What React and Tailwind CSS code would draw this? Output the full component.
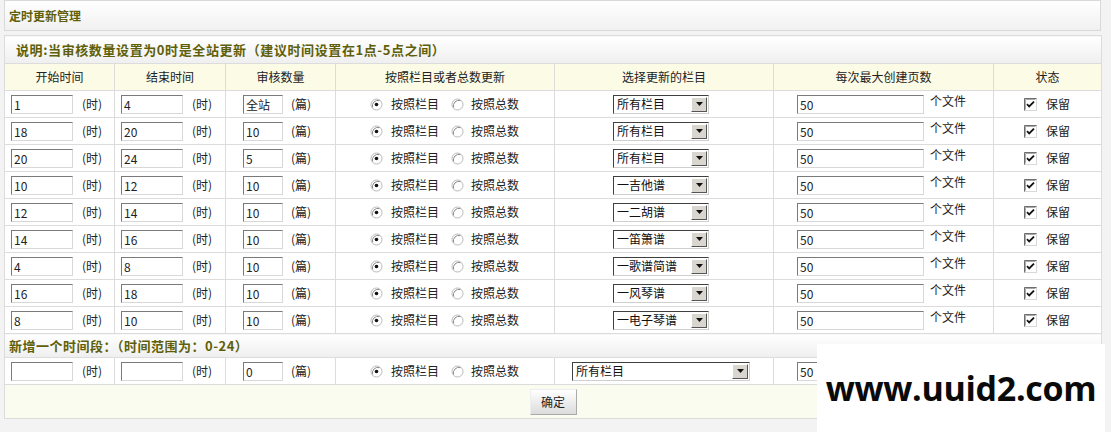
import React from 'react';

const rows = [
  ['1', '4', '全站', '所有栏目'],
  ['18', '20', '10', '所有栏目'],
  ['20', '24', '5', '所有栏目'],
  ['10', '12', '10', '一吉他谱'],
  ['12', '14', '10', '一二胡谱'],
  ['14', '16', '10', '一笛箫谱'],
  ['4', '8', '10', '一歌谱简谱'],
  ['16', '18', '10', '一风琴谱'],
  ['8', '10', '10', '一电子琴谱'],
];

const cjk = "font-['SimSun','Noto_Sans_CJK_SC',sans-serif]";

function TextBox({ value, w }) {
  return (
    <div
      className={`h-[19px] ${w} flex items-end bg-white border border-t-[#7a7a7a] border-l-[#7a7a7a] border-r-[#d8d8d8] border-b-[#d8d8d8] pl-[2px] pb-[1px] text-[12px] leading-[14px] text-[#222] ${cjk}`}
    >
      {value}
    </div>
  );
}

function Radio({ on }) {
  return (
    <svg width="13" height="13" viewBox="0 0 13 13" className="shrink-0">
      <circle cx="6.5" cy="6.5" r="5.5" fill="#fff" stroke="#b9b9b9" />
      <path d="M2.6 9.4 A5.5 5.5 0 0 1 9.4 2.6" stroke="#8a8a8a" fill="none" />
      {on && <circle cx="6.5" cy="6.5" r="1.8" fill="#111" />}
    </svg>
  );
}

function Check() {
  return (
    <svg width="13" height="13" viewBox="0 0 13 13" className="shrink-0">
      <rect x="0.5" y="0.5" width="12" height="12" fill="#fff" stroke="#d8d8d8" />
      <path d="M0.5 12.5 V0.5 H12.5" stroke="#6e6e6e" fill="none" />
      <path d="M1.5 11.5 V1.5 H11.5" stroke="#a8a8a8" fill="none" />
      <path d="M3 6.2 L5.2 8.5 L10 3.6" stroke="#111" strokeWidth="1.8" fill="none" />
    </svg>
  );
}

function Select({ text, w }) {
  return (
    <div
      className={`h-[19px] ${w} flex items-center justify-between bg-white border border-t-[#404040] border-l-[#404040] border-r-[#cfcfcf] border-b-[#cfcfcf]`}
    >
      <span className={`pl-[3px] text-[12px] leading-[14px] text-[#111] ${cjk}`}>{text}</span>
      <div className="h-[15px] w-[16px] mr-[1px] flex items-center justify-center bg-[#d8d6ce] border border-t-white border-l-white border-r-[#555] border-b-[#555]">
        <svg width="7" height="4" viewBox="0 0 7 4">
          <path d="M0 0 H7 L3.5 4 Z" fill="#111" />
        </svg>
      </div>
    </div>
  );
}

function DataRow({ r, last }) {
  const cell = 'border border-[#dcdcdc] p-0 h-[27px]';
  return (
    <tr className="bg-white">
      <td className={cell}>
        <div className="flex items-center pl-[6px] gap-[9px]">
          <TextBox value={r[0]} w="w-[62px]" />
          <span className="text-[12px] text-[#222]">(时)</span>
        </div>
      </td>
      <td className={cell}>
        <div className="flex items-center pl-[6px] gap-[9px]">
          <TextBox value={r[1]} w="w-[62px]" />
          <span className="text-[12px] text-[#222]">(时)</span>
        </div>
      </td>
      <td className={cell}>
        <div className="flex items-center pl-[17px] gap-[8px]">
          <TextBox value={r[2]} w="w-[40px]" />
          <span className="text-[12px] text-[#222]">(篇)</span>
        </div>
      </td>
      <td className={cell}>
        <div className="flex items-center pl-[34px] text-[12px] text-[#222]">
          <Radio on />
          <span className="ml-[8px]">按照栏目</span>
          <span className="ml-[12px]"><Radio /></span>
          <span className="ml-[7px]">按照总数</span>
        </div>
      </td>
      <td className={cell}>
        <div className={`flex items-center ${last ? 'pl-[17px]' : 'pl-[58px]'}`}>
          <Select text={r[3]} w={last ? 'w-[178px]' : 'w-[96px]'} />
        </div>
      </td>
      <td className={cell}>
        <div className="flex items-center pl-[23px] gap-[6px]">
          <TextBox value="50" w="w-[127px]" />
          <span className="text-[12px] text-[#222] -mt-[6px]">个文件</span>
        </div>
      </td>
      <td className={cell}>
        <div className="flex items-center pl-[30px] gap-[9px] text-[12px] text-[#222]">
          <Check />
          <span>保留</span>
        </div>
      </td>
    </tr>
  );
}

export default function App() {
  const head = 'border border-[#dcdcdc] h-[27px] font-normal text-[12px] text-[#222] bg-[#fbfbe6]';
  return (
    <div className={`relative w-[1111px] h-[432px] overflow-hidden bg-[#f3f3f3] ${cjk}`}>
      <div className="ml-[4px] w-[1097px] h-[31px] border border-[#d9d9d9] bg-gradient-to-b from-white to-[#f1f1f1] flex items-center pl-[4px]">
        <span className="text-[12px] font-bold text-[#5f5f0a]">定时更新管理</span>
      </div>
      <table className="mt-[4px] ml-[4px] w-[1097px] border-collapse table-fixed">
        <colgroup>
          <col className="w-[110px]" />
          <col className="w-[111px]" />
          <col className="w-[110px]" />
          <col className="w-[219px]" />
          <col className="w-[219px]" />
          <col className="w-[220px]" />
          <col className="w-[108px]" />
        </colgroup>
        <tbody>
          <tr>
            <td colSpan={7} className="border border-[#dcdcdc] h-[28px] bg-gradient-to-b from-white to-[#efefef] pl-[11px] text-[13px] tracking-[0.6px] font-bold text-[#5f5f0a]">
              说明:当审核数量设置为0时是全站更新（建议时间设置在1点-5点之间）
            </td>
          </tr>
          <tr>
            <th className={head}>开始时间</th>
            <th className={head}>结束时间</th>
            <th className={head}>审核数量</th>
            <th className={head}>按照栏目或者总数更新</th>
            <th className={head}>选择更新的栏目</th>
            <th className={head}>每次最大创建页数</th>
            <th className={head}>状态</th>
          </tr>
          {rows.map((r, i) => (
            <DataRow key={i} r={r} />
          ))}
          <tr>
            <td colSpan={7} className="border border-[#dcdcdc] h-[24px] bg-gradient-to-b from-white to-[#efefef] pl-[4px] text-[13px] tracking-[0.5px] font-bold text-[#5f5f0a]">
              新增一个时间段：（时间范围为：0-24）
            </td>
          </tr>
          <DataRow r={['', '', '0', '所有栏目']} last />
          <tr>
            <td colSpan={7} className="border border-[#dcdcdc] h-[34px] bg-[#fafcf0]">
              <div className="flex justify-center">
                <button className="h-[26px] w-[47px] border border-t-[#eee] border-l-[#eee] border-r-[#aaa] border-b-[#aaa] bg-gradient-to-b from-white to-[#dcdcdc] text-[12px] text-[#222]">
                  确定
                </button>
              </div>
            </td>
          </tr>
        </tbody>
      </table>
      <div className="absolute left-[817px] top-[344px] w-[288px] h-[88px] bg-white flex items-center justify-center">
        <span className="font-['Open_Sans',sans-serif] font-bold text-[34px] text-[#0a0a0a] tracking-[-0.3px]">www.uuid2.com</span>
      </div>
    </div>
  );
}
